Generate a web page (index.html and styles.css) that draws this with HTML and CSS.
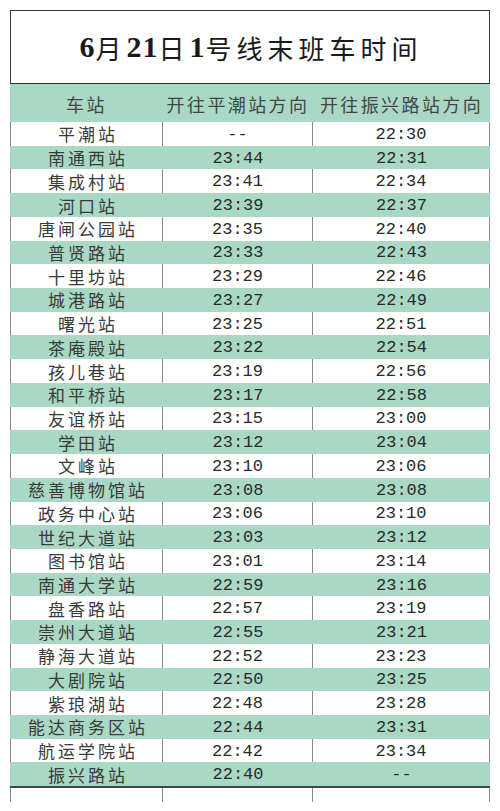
FILE: index.html
```html
<!DOCTYPE html>
<html lang="zh">
<head>
<meta charset="utf-8">
<link rel="stylesheet" href="styles.css">
</head>
<body>
<div class="sheet">
  <div class="title"><span class="num">6</span>月<span class="num">21</span>日<span class="num">1</span>号线末班车时间</div>
  <div class="row head">
    <div class="cell">车站</div>
    <div class="cell">开往平潮站方向</div>
    <div class="cell">开往振兴路站方向</div>
  </div>
  <div class="rows" id="rows">
    <div class="row"><div class="cell name">平潮站</div><div class="cell time">--</div><div class="cell time">22:30</div></div>
    <div class="row"><div class="cell name">南通西站</div><div class="cell time">23:44</div><div class="cell time">22:31</div></div>
    <div class="row"><div class="cell name">集成村站</div><div class="cell time">23:41</div><div class="cell time">22:34</div></div>
    <div class="row"><div class="cell name">河口站</div><div class="cell time">23:39</div><div class="cell time">22:37</div></div>
    <div class="row"><div class="cell name">唐闸公园站</div><div class="cell time">23:35</div><div class="cell time">22:40</div></div>
    <div class="row"><div class="cell name">普贤路站</div><div class="cell time">23:33</div><div class="cell time">22:43</div></div>
    <div class="row"><div class="cell name">十里坊站</div><div class="cell time">23:29</div><div class="cell time">22:46</div></div>
    <div class="row"><div class="cell name">城港路站</div><div class="cell time">23:27</div><div class="cell time">22:49</div></div>
    <div class="row"><div class="cell name">曙光站</div><div class="cell time">23:25</div><div class="cell time">22:51</div></div>
    <div class="row"><div class="cell name">茶庵殿站</div><div class="cell time">23:22</div><div class="cell time">22:54</div></div>
    <div class="row"><div class="cell name">孩儿巷站</div><div class="cell time">23:19</div><div class="cell time">22:56</div></div>
    <div class="row"><div class="cell name">和平桥站</div><div class="cell time">23:17</div><div class="cell time">22:58</div></div>
    <div class="row"><div class="cell name">友谊桥站</div><div class="cell time">23:15</div><div class="cell time">23:00</div></div>
    <div class="row"><div class="cell name">学田站</div><div class="cell time">23:12</div><div class="cell time">23:04</div></div>
    <div class="row"><div class="cell name">文峰站</div><div class="cell time">23:10</div><div class="cell time">23:06</div></div>
    <div class="row"><div class="cell name">慈善博物馆站</div><div class="cell time">23:08</div><div class="cell time">23:08</div></div>
    <div class="row"><div class="cell name">政务中心站</div><div class="cell time">23:06</div><div class="cell time">23:10</div></div>
    <div class="row"><div class="cell name">世纪大道站</div><div class="cell time">23:03</div><div class="cell time">23:12</div></div>
    <div class="row"><div class="cell name">图书馆站</div><div class="cell time">23:01</div><div class="cell time">23:14</div></div>
    <div class="row"><div class="cell name">南通大学站</div><div class="cell time">22:59</div><div class="cell time">23:16</div></div>
    <div class="row"><div class="cell name">盘香路站</div><div class="cell time">22:57</div><div class="cell time">23:19</div></div>
    <div class="row"><div class="cell name">崇州大道站</div><div class="cell time">22:55</div><div class="cell time">23:21</div></div>
    <div class="row"><div class="cell name">静海大道站</div><div class="cell time">22:52</div><div class="cell time">23:23</div></div>
    <div class="row"><div class="cell name">大剧院站</div><div class="cell time">22:50</div><div class="cell time">23:25</div></div>
    <div class="row"><div class="cell name">紫琅湖站</div><div class="cell time">22:48</div><div class="cell time">23:28</div></div>
    <div class="row"><div class="cell name">能达商务区站</div><div class="cell time">22:44</div><div class="cell time">23:31</div></div>
    <div class="row"><div class="cell name">航运学院站</div><div class="cell time">22:42</div><div class="cell time">23:34</div></div>
    <div class="row"><div class="cell name">振兴路站</div><div class="cell time">22:40</div><div class="cell time">--</div></div>
  </div>
  <div class="row tail"><div class="cell"></div><div class="cell"></div><div class="cell"></div></div>
</div>
</body>
</html>
```

FILE: styles.css
```css
html, body {
  margin: 0;
  padding: 0;
  background: #ffffff;
}

body {
  font-family: "Noto Sans CJK SC", "Liberation Serif", serif;
  color: #333333;
}

.sheet {
  width: 480px;
  margin: 10px 0 0 10px;
}

.title {
  border: 1px solid #3a3a3a;
  border-bottom: 1.5px solid #333333;
  display: flex;
  align-items: center;
  justify-content: center;
  font-size: 26px;
  font-weight: normal;
  letter-spacing: 5px;
  color: #1a1a1a;
  padding-left: 2px;
  box-sizing: border-box;
  height: 74px;
}

.title .num {
  font-family: "Liberation Serif", serif;
  font-weight: bold;
  font-size: 30px;
  letter-spacing: 1px;
}

.row {
  display: grid;
  grid-template-columns: 153px 150px 177px;
  height: 23.72px;
}

.cell {
  display: flex;
  align-items: center;
  justify-content: center;
  font-size: 17px;
  line-height: 1;
  letter-spacing: 2px;
  color: #3a3a3a;
  box-sizing: border-box;
}

.head {
  height: 38px;
  background: #a9d8c4;
}

.head .cell {
  font-size: 18px;
  letter-spacing: 2.4px;
  color: #454545;
  padding-top: 2px;
}

.rows .row:nth-child(odd) {
  background: #ffffff;
}

.rows .row:nth-child(odd) .cell {
  border-right: 1px solid #8a8a8a;
}

.rows .row:nth-child(odd) .cell:first-child {
  border-left: 1px solid #8a8a8a;
}

.rows .row:nth-child(even) {
  background: #a9d8c4;
}

.name {
  letter-spacing: 3px;
  padding-left: 3px;
}

.time {
  font-family: "Liberation Mono", monospace;
  font-size: 17px;
  letter-spacing: 0;
  padding-top: 1px;
  color: #2a2a2a;
}

.tail {
  height: 14px;
  border-top: 2px solid #444444;
}

.tail .cell {
  border-right: 1px solid #8a8a8a;
}

.tail .cell:first-child {
  border-left: 1px solid #8a8a8a;
}
```
